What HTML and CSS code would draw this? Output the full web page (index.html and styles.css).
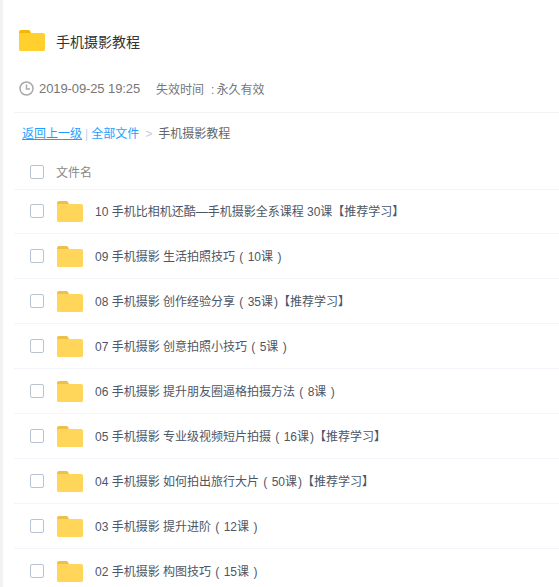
FILE: index.html
```html
<!DOCTYPE html>
<html lang="zh">
<head>
<meta charset="utf-8">
<title>手机摄影教程</title>
<link rel="stylesheet" href="styles.css">
</head>
<body>
<main class="page">
  <header class="head">
    <div class="title-row">
      <svg class="title-folder" viewBox="0 0 26 21"><path class="tab" d="M0 2a2 2 0 0 1 2-2h7a2 2 0 0 1 2 1l1 2v4H0z"/><path class="body" d="M0 3h24a2 2 0 0 1 2 2v14.500a1.500 1.500 0 0 1-1.500 1.500H1.500A1.500 1.500 0 0 1 0 19.500z"/></svg>
      <h1 class="title">手机摄影教程</h1>
    </div>
    <div class="meta">
      <svg class="clock" viewBox="0 0 15 15"><circle cx="7.500" cy="7.500" r="6.500"/><path d="M7.500 3.500v4.500h3.500"/></svg>
      <span class="date">2019-09-25 19:25</span>
      <span class="expire">失效时间<span class="colon">:</span>永久有效</span>
    </div>
  </header>
  <nav class="crumbs"><a class="back">返回上一级</a><span class="bar">|</span><span class="all">全部文件</span><span class="gt">&gt;</span><span class="cur">手机摄影教程</span></nav>
  <div class="list-head"><span class="check"></span><span class="col">文件名</span></div>
  <ul class="list">
    <li class="row"><span class="check"></span><svg class="folder" viewBox="0 0 26 21"><path class="tab" d="M0 2a2 2 0 0 1 2-2h7a2 2 0 0 1 2 1l1 2v4H0z"/><path class="body" d="M0 3h24a2 2 0 0 1 2 2v14.500a1.500 1.500 0 0 1-1.500 1.500H1.500A1.500 1.500 0 0 1 0 19.500z"/></svg><span class="name">10 手机比相机还酷—手机摄影全系课程 30课【推荐学习】</span></li>
    <li class="row"><span class="check"></span><svg class="folder" viewBox="0 0 26 21"><path class="tab" d="M0 2a2 2 0 0 1 2-2h7a2 2 0 0 1 2 1l1 2v4H0z"/><path class="body" d="M0 3h24a2 2 0 0 1 2 2v14.500a1.500 1.500 0 0 1-1.500 1.500H1.500A1.500 1.500 0 0 1 0 19.500z"/></svg><span class="name">09 手机摄影 生活拍照技巧 <span class="lp">(</span> 10课 <span class="rp">)</span></span></li>
    <li class="row"><span class="check"></span><svg class="folder" viewBox="0 0 26 21"><path class="tab" d="M0 2a2 2 0 0 1 2-2h7a2 2 0 0 1 2 1l1 2v4H0z"/><path class="body" d="M0 3h24a2 2 0 0 1 2 2v14.500a1.500 1.500 0 0 1-1.500 1.500H1.500A1.500 1.500 0 0 1 0 19.500z"/></svg><span class="name">08 手机摄影 创作经验分享 <span class="lp">(</span> 35课<span class="rp">)</span>【推荐学习】</span></li>
    <li class="row"><span class="check"></span><svg class="folder" viewBox="0 0 26 21"><path class="tab" d="M0 2a2 2 0 0 1 2-2h7a2 2 0 0 1 2 1l1 2v4H0z"/><path class="body" d="M0 3h24a2 2 0 0 1 2 2v14.500a1.500 1.500 0 0 1-1.500 1.500H1.500A1.500 1.500 0 0 1 0 19.500z"/></svg><span class="name">07 手机摄影 创意拍照小技巧 <span class="lp">(</span> 5课 <span class="rp">)</span></span></li>
    <li class="row"><span class="check"></span><svg class="folder" viewBox="0 0 26 21"><path class="tab" d="M0 2a2 2 0 0 1 2-2h7a2 2 0 0 1 2 1l1 2v4H0z"/><path class="body" d="M0 3h24a2 2 0 0 1 2 2v14.500a1.500 1.500 0 0 1-1.500 1.500H1.500A1.500 1.500 0 0 1 0 19.500z"/></svg><span class="name">06 手机摄影 提升朋友圈逼格拍摄方法 <span class="lp">(</span> 8课 <span class="rp">)</span></span></li>
    <li class="row"><span class="check"></span><svg class="folder" viewBox="0 0 26 21"><path class="tab" d="M0 2a2 2 0 0 1 2-2h7a2 2 0 0 1 2 1l1 2v4H0z"/><path class="body" d="M0 3h24a2 2 0 0 1 2 2v14.500a1.500 1.500 0 0 1-1.500 1.500H1.500A1.500 1.500 0 0 1 0 19.500z"/></svg><span class="name">05 手机摄影 专业级视频短片拍摄 <span class="lp">(</span> 16课<span class="rp">)</span>【推荐学习】</span></li>
    <li class="row"><span class="check"></span><svg class="folder" viewBox="0 0 26 21"><path class="tab" d="M0 2a2 2 0 0 1 2-2h7a2 2 0 0 1 2 1l1 2v4H0z"/><path class="body" d="M0 3h24a2 2 0 0 1 2 2v14.500a1.500 1.500 0 0 1-1.500 1.500H1.500A1.500 1.500 0 0 1 0 19.500z"/></svg><span class="name">04 手机摄影 如何拍出旅行大片 <span class="lp">(</span> 50课<span class="rp">)</span>【推荐学习】</span></li>
    <li class="row"><span class="check"></span><svg class="folder" viewBox="0 0 26 21"><path class="tab" d="M0 2a2 2 0 0 1 2-2h7a2 2 0 0 1 2 1l1 2v4H0z"/><path class="body" d="M0 3h24a2 2 0 0 1 2 2v14.500a1.500 1.500 0 0 1-1.500 1.500H1.500A1.500 1.500 0 0 1 0 19.500z"/></svg><span class="name">03 手机摄影 提升进阶 <span class="lp">(</span> 12课 <span class="rp">)</span></span></li>
    <li class="row"><span class="check"></span><svg class="folder" viewBox="0 0 26 21"><path class="tab" d="M0 2a2 2 0 0 1 2-2h7a2 2 0 0 1 2 1l1 2v4H0z"/><path class="body" d="M0 3h24a2 2 0 0 1 2 2v14.500a1.500 1.500 0 0 1-1.500 1.500H1.500A1.500 1.500 0 0 1 0 19.500z"/></svg><span class="name">02 手机摄影 构图技巧 <span class="lp">(</span> 15课 <span class="rp">)</span></span></li>
  </ul>
</main>
</body>
</html>
```
FILE: styles.css
```css
html, body {
  margin: 0;
  height: 100%;
  overflow: hidden;
  background: #fff;
}
body {
  font-family: "Liberation Sans", "Noto Sans CJK SC", sans-serif;
  font-size: 12px;
  color: #666;
}
.page {
  height: 587px;
  box-sizing: border-box;
  border-left: 3px solid #f1f2f4;
  padding-left: 11px;
}
.head {
  border-bottom: 1px solid #f3f3f3;
  height: 112px;
  box-sizing: content-box;
}
.title-row {
  display: flex;
  align-items: center;
  padding: 30px 0 0 5px;
  height: 21px;
}
.title-folder {
  width: 26px;
  height: 21px;
  flex: none;
}
.title-folder .tab { fill: #f5b800; }
.title-folder .body { fill: #ffd02e; }
.title {
  margin: 0 0 0 11px;
  font-size: 14px;
  font-weight: 400;
  color: #333;
}
.meta {
  display: flex;
  align-items: center;
  margin-top: 27px;
  padding-left: 5px;
  height: 20px;
  color: #777;
}
.clock {
  width: 15px;
  height: 15px;
  flex: none;
  fill: none;
  stroke: #aaa;
  stroke-width: 1.500;
}
.date {
  margin-left: 5px;
  font-size: 13px;
  letter-spacing: -0.1px;
}
.expire { margin-left: 16px; }
.colon { margin: 0 2px 0 7px; }
.crumbs {
  height: 42px;
  line-height: 42px;
  padding-left: 8px;
  display: flex;
  color: #666;
}
.back {
  color: #1e9fff;
  text-decoration: underline;
}
.bar {
  color: #b9d5ee;
  margin: 0 3px;
}
.all { color: #1e9fff; }
.gt {
  color: #c5cdd8;
  margin: 0 6px;
}
.list-head {
  height: 34px;
  display: flex;
  align-items: center;
  padding-left: 16px;
  border-bottom: 1px solid #f3f4f6;
  color: #888;
}
.col {
  margin-left: 12px;
  padding-bottom: 2px;
}
.check {
  width: 12px;
  height: 12px;
  flex: none;
  border: 1px solid #b7c4d4;
  border-radius: 2px;
  background: #fff;
}
.list {
  list-style: none;
  margin: 0;
  padding: 0;
}
.row {
  height: 44px;
  display: flex;
  align-items: center;
  padding-left: 16px;
  border-bottom: 1px solid #f2f5fa;
}
.row:first-child {
  height: 42px;
  padding-bottom: 1px;
}
.folder {
  width: 26px;
  height: 21px;
  flex: none;
  margin-left: 13px;
}
.folder .tab { fill: #edc04a; }
.folder .body { fill: #ffd659; }
.name {
  margin-left: 12px;
  padding-bottom: 2px;
  color: #4d5666;
  white-space: nowrap;
}
.lp { margin: 0 1px; }
.rp { margin-left: 1px; }
```
